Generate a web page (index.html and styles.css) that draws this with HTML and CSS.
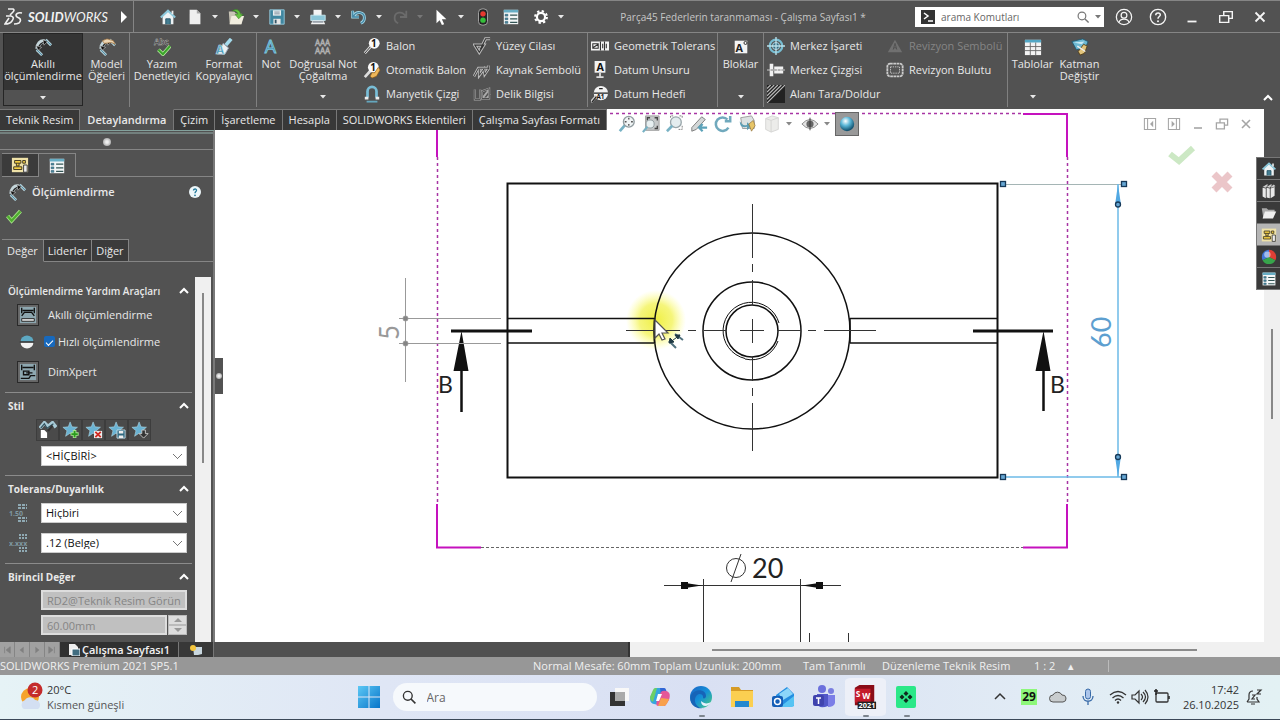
FILE: index.html
```html
<!DOCTYPE html>
<html lang="tr">
<head>
<meta charset="utf-8">
<meta name="viewport" content="width=device-width, initial-scale=1">
<title>Parça45 Federlerin taranmaması - Çalışma Sayfası1</title>
<link rel="stylesheet" href="styles.css">
</head>
<body>
<svg class="sprite" aria-hidden="true">
  <defs>
    <radialGradient id="ball" cx=".4" cy=".3" r=".7"><stop offset="0" stop-color="#fff"/><stop offset=".45" stop-color="#5db8d8"/><stop offset="1" stop-color="#0b4a68"/></radialGradient>
    <linearGradient id="edge" x1="0" y1="0" x2="1" y2="1"><stop offset="0" stop-color="#1b62c4"/><stop offset=".5" stop-color="#1490d8"/><stop offset="1" stop-color="#4fd07a"/></linearGradient>
    <linearGradient id="win" x1="0" y1="0" x2="1" y2="1"><stop offset="0" stop-color="#5cc8f5"/><stop offset="1" stop-color="#0874c9"/></linearGradient>
  </defs>
  <symbol id="caret" viewBox="0 0 8 8"><path d="M1 2h6L4 5.500z" fill="currentColor"/></symbol>
  <symbol id="up" viewBox="0 0 12 12"><path d="M2 8l4-4 4 4" fill="none" stroke="currentColor" stroke-width="2"/></symbol>
  <symbol id="home" viewBox="0 0 20 20"><path d="M4 9v9h12V9l-6-5z" fill="#eef3f4"/><path d="M2 10.500L10 3l8 7.500" fill="none" stroke="#8cc9dc" stroke-width="2.200"/><path d="M7.500 18v-6h5v6" fill="#447d91" stroke="#225064"/><path d="M14 3h2v4h-2z" fill="#eee"/></symbol>
  <symbol id="page" viewBox="0 0 20 20"><path d="M4 2h8l4 4v12H4z" fill="#efefef"/><path d="M12 2v4h4z" fill="#a7a7a7"/></symbol>
  <symbol id="open" viewBox="0 0 20 20"><path d="M2 4h6l2 2h6v12H3z" fill="#c8c4b6"/><path d="M5 9h14l-3 9H3z" fill="#f1eddf"/><path d="M6 3c5-3 9 0 9 4h3l-5 5-4-5h3c0-2-2-4-6-4z" fill="#65c442" stroke="#2c7a1b" stroke-width=".6"/></symbol>
  <symbol id="save" viewBox="0 0 20 20"><path d="M2 2h16v16H2z" fill="#3f86a0" stroke="#96cbdc"/><path d="M5.500 2.500h9v6h-9z" fill="#e8eef0"/><path d="M6 12h8v6H6z" fill="#e5e5e5"/><path d="M7.500 13h2v4h-2z" fill="#356"/><path d="M7 4.500h6M7 6.500h6" stroke="#789"/></symbol>
  <symbol id="print" viewBox="0 0 20 20"><path d="M5 2h9v7H5z" fill="#f4f4f4"/><path d="M2 8h16v6H2z" fill="#8cc6d8" stroke="#c5e5ee"/><path d="M4 14h12l2 4H2z" fill="#f3f3f3"/><path d="M4 15.500h12" stroke="#456"/></symbol>
  <symbol id="undo" viewBox="0 0 20 20"><path d="M3 3v7h7M4 9c3-6 12-5 12 2 0 3-2 5-4 6" fill="none" stroke="#a1d7e8" stroke-width="3.200"/><path d="M3 3v7h7M4 9c3-6 12-5 12 2 0 3-2 5-4 6" fill="none" stroke="#4386a4" stroke-width="1.400"/></symbol>
  <symbol id="redo" viewBox="0 0 20 20"><path d="M17 3v7h-7M16 9C13 3 4 4 4 11c0 3 2 5 4 6" fill="none" stroke="#6b6b6b" stroke-width="2"/></symbol>
  <symbol id="arrow" viewBox="0 0 20 20"><path d="M5 2v15l3.500-3.500L11 19l2.500-1-2.500-5.500h5z" fill="#fff"/></symbol>
  <symbol id="traffic" viewBox="0 0 20 20"><rect x="5" y="1" width="10" height="18" rx="4" fill="#242424" stroke="#aaa"/><circle cx="10" cy="6.500" r="3" fill="#e6392f"/><circle cx="10" cy="13.500" r="3" fill="#35be3b"/></symbol>
  <symbol id="form" viewBox="0 0 20 20"><path d="M2 2h16v16H2z" fill="#f3f6f7"/><path d="M2 2h16v3H2z" fill="#68aec5"/><path d="M3.500 7h3v2h-3zM3.500 11h3v2h-3zM3.500 15h3v2h-3z" fill="#4a8ba3" stroke="#28566a" stroke-width=".6"/><path d="M9 8h8M9 12h8M9 16h8" stroke="#355" stroke-width="1.300"/></symbol>
  <symbol id="gear" viewBox="0 0 20 20"><circle cx="10" cy="10" r="4.500" fill="none" stroke="#fff" stroke-width="2.400"/><circle cx="10" cy="10" r="6.500" fill="none" stroke="#fff" stroke-width="2.400" stroke-dasharray="2.550 2.550"/></symbol>
  <symbol id="dim" viewBox="0 0 20 20"><path d="M3 13l6 6M13 2l6 6" stroke="#c9e4ec" stroke-width="3"/><path d="M3 13l6 6M13 2l6 6" stroke="#568ca0" stroke-width="1.300"/><path d="M4 12c0-5 3-9 8-8" fill="none" stroke="#c4d5da" stroke-width="5"/><path d="M5 11c1-4 3-6 7-6.500" fill="none" stroke="#202020" stroke-width="1.500"/><path d="M2.500 8.500l2 5 4-3zM10 2l5 2-4 4z" fill="#111" stroke="#ccc" stroke-width=".6"/></symbol>
  <symbol id="model" viewBox="0 0 20 20"><use href="#dim"/><path d="M5 3l5-2 7 2 2 4-4-2-8 1z" fill="#ecd5b4" stroke="#a6743c" stroke-width=".8"/></symbol>
  <symbol id="magnet" viewBox="0 0 20 20"><path d="M5 14V7a5 5 0 0 1 10 0v7" fill="none" stroke="#79bed7" stroke-width="3"/><path d="M2 13h4v3H2zM14 13h4v3h-4z" fill="#eee"/><path d="M4 18.500h12" stroke="#64a6bd" stroke-width="2"/></symbol>
  <symbol id="surface" viewBox="0 0 20 20"><path d="M2 9h10L7 17zM8 14l6-12h5" fill="none" stroke="#bbb" stroke-width="3.400"/><path d="M2 9h10L7 17zM8 14l6-12h5" fill="none" stroke="#333" stroke-width="1.200"/></symbol>
  <symbol id="weld" viewBox="0 0 20 20"><path d="M1 17l5-9h12M7 9v7l5-7 1 6 4-6V5" fill="none" stroke="#bbb" stroke-width="3"/><path d="M1 17l5-9h12M7 9v7l5-7 1 6 4-6V5" fill="none" stroke="#333"/></symbol>
  <symbol id="hole" viewBox="0 0 20 20"><path d="M2 5v11h6V5M10 15V7l8-3v11zM11 14l7-9M15 15l4-5" fill="none" stroke="#aaa" stroke-width="2.200"/><path d="M2 5v11h6V5M10 15V7l8-3v11z" fill="none" stroke="#444"/></symbol>
  <symbol id="gtol" viewBox="0 0 20 20"><path d="M0 5h20v10H0z" fill="#f3f3f3"/><path d="M2 7.500h6v5H2zM2 12l6-4M10.500 5v10M15 5v10M13 7.500v5M17 7.500v5" fill="none" stroke="#333" stroke-width="1.200"/></symbol>
  <symbol id="center" viewBox="0 0 20 20"><circle cx="10" cy="10" r="7" fill="none" stroke="#78bdd2" stroke-width="2.500"/><circle cx="10" cy="10" r="4" fill="#356a80" stroke="#bce2ed"/><path d="M10 0v20M0 10h20" stroke="#b8dfe9" stroke-width="1.500"/></symbol>
  <symbol id="line" viewBox="0 0 20 20"><path d="M3 3h4v14H3zM8 6h10v8H8z" fill="#f1f1f1"/><path d="M0 10h20" stroke="#d9d9d9"/><path d="M4 10h14" stroke="#777" stroke-dasharray="3 1"/></symbol>
  <symbol id="hatch" viewBox="0 0 20 20"><path d="M0 0h20v20H0z" fill="#222"/><path d="M0 4l4-4M0 8l8-8M0 12L12 0M0 16L16 0M0 20L20 0" stroke="#bbb" stroke-width="1.300"/></symbol>
  <symbol id="revision" viewBox="0 0 20 20"><path d="M10 3l8 14H2z" fill="#707070"/><path d="M8 14l2-7 2 7M9 12h2" stroke="#4e4e4e" fill="none"/></symbol>
  <symbol id="cloudrev" viewBox="0 0 20 20"><rect x="1.500" y="3" width="17" height="14" rx="3" fill="#555" stroke="#ccc" stroke-width="2" stroke-dasharray="3 .6"/><rect x="5" y="6.500" width="10" height="7" fill="none" stroke="#ccc" stroke-dasharray="1.500 1"/></symbol>
  <symbol id="table" viewBox="0 0 20 20"><path d="M1 2h18v17H1z" fill="#f3f3f3"/><path d="M1 2h18v3H1z" fill="#53a7c5"/><path d="M1 9.500h18M1 14h18M7 5v14M13 5v14" stroke="#666"/></symbol>
  <symbol id="layer" viewBox="0 0 20 20"><path d="M1 4l12-3 6 3-3 7-10 2z" fill="#6db9d2" stroke="#235a70"/><path d="M3 5l12-1-3 3z" fill="#c8eaf4"/><path d="M8 15l6-8 4 2-3 8-5 2z" fill="#e1c47b" stroke="#554019"/><path d="M7 9l9 6" stroke="#eee" stroke-width="1.500"/></symbol>
  <symbol id="help" viewBox="0 0 20 20"><circle cx="10" cy="10" r="8.500" fill="none" stroke="currentColor" stroke-width="1.500"/><path d="M7.500 8c0-3.500 5.500-3.300 5 0-.3 1.500-2.500 1.600-2.500 4" fill="none" stroke="currentColor" stroke-width="1.700"/><circle cx="10" cy="14.800" r="1.100" fill="currentColor"/></symbol>
  <symbol id="user" viewBox="0 0 20 20"><circle cx="10" cy="10" r="8.500" fill="none" stroke="currentColor" stroke-width="1.400"/><circle cx="10" cy="8" r="3.200" fill="none" stroke="currentColor" stroke-width="1.400"/><path d="M4.500 16c1-5 10-5 11 0" fill="none" stroke="currentColor" stroke-width="1.400"/></symbol>
  <symbol id="min" viewBox="0 0 20 20"><path d="M5 15h10" stroke="currentColor" stroke-width="2"/></symbol>
  <symbol id="restore" viewBox="0 0 20 20"><path d="M7.500 8V4H17v7.500h-4M3 8.500h10V16H3z" fill="none" stroke="currentColor" stroke-width="1.600"/></symbol>
  <symbol id="close" viewBox="0 0 20 20"><path d="M5 5l10 10M15 5L5 15" stroke="currentColor" stroke-width="2"/></symbol>
  <symbol id="mag" viewBox="0 0 20 20"><circle cx="8.500" cy="8.500" r="5.500" fill="none" stroke="currentColor" stroke-width="1.700"/><path d="M12.500 12.500L18 18" stroke="currentColor" stroke-width="2"/></symbol>
  <symbol id="sheet" viewBox="0 0 20 20"><path d="M1 2h18v16H1z" fill="#efe2a8"/><path d="M4 5h7v3H4zM13 5h3v3h-3zM6 8v3h3V8M3 15h9v-3H3z" fill="#f3cf45" stroke="#38311e"/><path d="M14 10h4v8h-4z" fill="#eee" stroke="#333"/></symbol>
  <symbol id="check" viewBox="0 0 20 20"><path d="M2 10l5 6L18 4" fill="none" stroke="#a9e38c" stroke-width="5"/><path d="M2 10l5 6L18 4" fill="none" stroke="#4fae2e" stroke-width="3"/></symbol>
  <symbol id="smart" viewBox="0 0 20 20"><path d="M1 1h18v18H1z" fill="#8da7b0"/><path d="M3 2v6M17 2v6M4 5h12M3 11l3-4h8l3 4" fill="none" stroke="#111" stroke-width="1.500"/><path d="M3 14h14v3H3z" fill="#ddd" stroke="#222"/></symbol>
  <symbol id="dimx" viewBox="0 0 20 20"><path d="M1 1h18v18H1z" fill="#8da7b0"/><path d="M3 2v6M17 2v6M4 5h12M2 17h9l2-3h5M5 9h6v4H5zM8 11h7" fill="none" stroke="#111" stroke-width="1.500"/></symbol>
  <symbol id="half" viewBox="0 0 20 20"><path d="M2 9a8 7 0 0 1 16 0z" fill="#5da8c2"/><path d="M2 11a8 7 0 0 0 16 0z" fill="#f2f2f2"/><path d="M1 10h18" stroke="#222"/></symbol>
  <symbol id="defstyle" viewBox="0 0 20 20"><path d="M1 8l5-6 4 4 5-4 4 5" fill="none" stroke="#a8cad6" stroke-width="4"/><path d="M2 8l4-5 3 5 7-5" fill="none" stroke="#30505c" stroke-width="1.300"/><path d="M10 11l5-6" stroke="#333" stroke-width="2.500"/><path d="M2 10h4l3 3v6H2z" fill="#fff"/></symbol>
  <symbol id="star" viewBox="0 0 20 20"><path d="M9 1l2.200 5.500 6 .4-4.600 3.800L14 17l-5-3.500L4 17l1.500-6.300L1 7l6-.5z" fill="#6ab3d3" stroke="#b3d9e7" stroke-width=".6"/></symbol>
  <symbol id="addstar" viewBox="0 0 20 20"><use href="#star"/><path d="M14 10v9M9.500 14.500h9" stroke="#a6e38f" stroke-width="4"/><path d="M14 11v7M10.500 14.500h7" stroke="#2b9b1e" stroke-width="2"/></symbol>
  <symbol id="delstar" viewBox="0 0 20 20"><use href="#star"/><path d="M10 11h9v8h-9z" fill="#eee"/><path d="M11.500 12l6 6M17.500 12l-6 6" stroke="#d12a22" stroke-width="2"/></symbol>
  <symbol id="savestar" viewBox="0 0 20 20"><use href="#star"/><path d="M10 10h9v9h-9z" fill="#2f6980" stroke="#c4dde6"/><path d="M12 11h5v3h-5zM12 16h5v3h-5z" fill="#eee"/></symbol>
  <symbol id="loadstar" viewBox="0 0 20 20"><use href="#star"/><path d="M12 10h4v4h3l-5 5-5-5h3z" fill="#333" stroke="#ccc"/></symbol>
  <symbol id="books" viewBox="0 0 20 20"><path d="M2 6l4 1v12l-4-2zM7 6l4 1v12l-4-1zM12 7l5-2v11l-5 3z" fill="#e8e8e8"/><path d="M2 5l5-3h2L6 6zM7 5l5-3h2l-3 4zM12 5l4-3 2 2-5 2z" fill="#ccc"/></symbol>
  <symbol id="folder" viewBox="0 0 20 20"><path d="M1 4h6l2 2h8v4L3 17z" fill="#aaa"/><path d="M5 8h14l-4 9H2z" fill="#efefef"/></symbol>
  <symbol id="wheel" viewBox="0 0 20 20"><path d="M10 10V1a9 9 0 0 0-8 13z" fill="#4276d8"/><path d="M10 10V1a9 9 0 0 1 8 13z" fill="#df3f35"/><path d="M10 10l8 4a9 9 0 0 1-16 0z" fill="#37a54b"/><circle cx="8" cy="7" r="4" fill="#fff" opacity=".5"/></symbol>
  <symbol id="zoomfit" viewBox="0 0 20 20"><path d="M2 18l6-7" stroke="#76b1c4" stroke-width="3"/><circle cx="12" cy="7.500" r="6" fill="#f0f4f5" stroke="#929da1" stroke-width="1.500"/><path d="M12 3v2M12 10v2M7.500 7.500h2M14.500 7.500h2" stroke="#555" stroke-width="1.500"/></symbol>
  <symbol id="zoomarea" viewBox="0 0 20 20"><path d="M4 1h15v16H4z" fill="#c6c9ca" stroke="#999"/><path d="M6 6V3h3M14 3h3v3M17 12v3h-3" fill="none" stroke="#444" stroke-width="1.500"/><circle cx="9" cy="10" r="4.500" fill="#e7eff1" stroke="#8c999d"/><path d="M1 19l5-6" stroke="#79b2c4" stroke-width="2.500"/></symbol>
  <symbol id="zoomprev" viewBox="0 0 20 20"><path d="M8 1H5v3M15 1h3v3M18 12v4h-4" fill="none" stroke="#777" stroke-dasharray="2 1"/><circle cx="11" cy="8" r="6" fill="#e4edef" stroke="#9aa7ab" stroke-width="1.500"/><path d="M1 18l6-6" stroke="#79b2c4" stroke-width="3"/></symbol>
  <symbol id="pencil" viewBox="0 0 20 20"><path d="M2 14L13 2l4 3L7 16l-5 2z" fill="#d3d7d7" stroke="#777"/><path d="M19 14h-7M14 10l-4 4 4 4" fill="none" stroke="#5ca2b9" stroke-width="2.500"/></symbol>
  <symbol id="rotate" viewBox="0 0 20 20"><path d="M16 14a7.500 7.500 0 1 1-1-9M18 1v6h-6" fill="none" stroke="#70a9bd" stroke-width="2.800"/></symbol>
  <symbol id="section" viewBox="0 0 20 20"><path d="M3 3l12-2 3 5v9H5z" fill="#dce2e2" stroke="#999"/><path d="M2 7c0 7 4 7 8 6v4l5-5-5-4v3c-4 1-5 0-8-4z" fill="#5e9eb4"/><path d="M12 10l5-4 2 6-4 6z" fill="#e7c568" stroke="#886831" stroke-width=".7"/></symbol>
  <symbol id="cube" viewBox="0 0 20 20"><path d="M3 4l7-3 7 2v13l-8 3-6-3z" fill="#ececea" stroke="#d4d4d2"/><path d="M3 4l6 2v13M9 6l8-3" fill="none" stroke="#d4d4d2"/></symbol>
  <symbol id="eye" viewBox="0 0 20 20"><path d="M1 10q9-10 18 0-9 10-18 0z" fill="#e3e3e3" stroke="#888"/><circle cx="10" cy="10" r="4" fill="#666"/><path d="M10 3v14" stroke="#333"/></symbol>
  <symbol id="sphere" viewBox="0 0 20 20"><circle cx="10" cy="10" r="8" fill="url(#ball)"/></symbol>
  <symbol id="prevpane" viewBox="0 0 20 20"><path d="M3 3h14v14H3zM7 3v14" fill="none" stroke="currentColor" stroke-width="1.300"/><path d="M14 6v8l-4-4z" fill="currentColor"/></symbol>
  <symbol id="nextpane" viewBox="0 0 20 20"><path d="M3 3h14v14H3zM13 3v14" fill="none" stroke="currentColor" stroke-width="1.300"/><path d="M7 6v8l4-4z" fill="currentColor"/></symbol>
</svg>

<header class="titlebar">
  <div class="brand">
    <svg class="ds" viewBox="0 0 20 18" aria-hidden="true"><path d="M4 1h5q2 1 0 3L6 7M2 8h5q4 1 1 5-2 3-7 3l4-6M18 5q-5-1-6 2 0 2 3 3 3 2 0 5-2 1-5 1" fill="none" stroke="#f0f0f0" stroke-width="1.600"/></svg>
    <span class="wordmark"><b>SOLID</b>WORKS</span>
    <svg class="play" viewBox="0 0 8 12" aria-hidden="true"><path d="M1 0v12l6-6z" fill="#fff"/></svg>
  </div>
  <nav class="quick" aria-label="Hızlı erişim">
    <button class="q" aria-label="Giriş"><svg class="ic"><use href="#home"/></svg></button>
    <button class="q split" aria-label="Yeni"><svg class="ic"><use href="#page"/></svg><svg class="car"><use href="#caret"/></svg></button>
    <button class="q split" aria-label="Aç"><svg class="ic"><use href="#open"/></svg><svg class="car"><use href="#caret"/></svg></button>
    <button class="q split" aria-label="Kaydet"><svg class="ic"><use href="#save"/></svg><svg class="car"><use href="#caret"/></svg></button>
    <button class="q split" aria-label="Yazdır"><svg class="ic"><use href="#print"/></svg><svg class="car"><use href="#caret"/></svg></button>
    <button class="q split" aria-label="Geri al"><svg class="ic"><use href="#undo"/></svg><svg class="car"><use href="#caret"/></svg></button>
    <button class="q split dim" aria-label="Yinele"><svg class="ic"><use href="#redo"/></svg><svg class="car"><use href="#caret"/></svg></button>
    <button class="q split" aria-label="Seç"><svg class="ic"><use href="#arrow"/></svg><svg class="car"><use href="#caret"/></svg></button>
    <button class="q" aria-label="Yeniden oluştur"><svg class="ic"><use href="#traffic"/></svg></button>
    <button class="q" aria-label="Dosya özellikleri"><svg class="ic"><use href="#form"/></svg></button>
    <button class="q split" aria-label="Seçenekler"><svg class="ic"><use href="#gear"/></svg><svg class="car"><use href="#caret"/></svg></button>
  </nav>
  <h1 class="doc">Parça45 Federlerin taranmaması - Çalışma Sayfası1 *</h1>
  <label class="search">
    <svg viewBox="0 0 14 14" class="term" aria-hidden="true"><path d="M0 0h14v14H0z" fill="#333"/><path d="M3 3l4 3-4 3M7 11h5" fill="none" stroke="#fff" stroke-width="1.500"/></svg>
    <input type="text" placeholder="arama Komutları" aria-label="arama Komutları">
    <svg class="mag"><use href="#mag"/></svg><svg class="car"><use href="#caret"/></svg>
  </label>
  <div class="winbtns">
    <button aria-label="Hesap"><svg class="ic"><use href="#user"/></svg></button>
    <button aria-label="Yardım"><svg class="ic"><use href="#help"/></svg></button>
    <button aria-label="Simge durumuna küçült"><svg class="ic"><use href="#min"/></svg></button>
    <button aria-label="Geri yükle"><svg class="ic"><use href="#restore"/></svg></button>
    <button aria-label="Kapat"><svg class="ic"><use href="#close"/></svg></button>
  </div>
</header>

<section class="ribbon" aria-label="Detaylandırma komutları">
  <div class="group g1">
    <button class="big active"><span class="face"><svg class="ic"><use href="#dim"/></svg>Akıllı<br>ölçümlendirme</span><svg class="car"><use href="#caret"/></svg></button>
    <button class="big w45"><span class="face"><svg class="ic"><use href="#model"/></svg>Model<br>Öğeleri</span></button>
  </div>
  <div class="group g2">
    <button class="big w64"><span class="face"><svg class="ic" viewBox="0 0 20 20"><text x="1" y="8" font-size="9" font-weight="700" fill="#333" stroke="#ccc" stroke-width=".4">Abc</text><path d="M6 13l5 5 8-9" fill="none" stroke="#c4efad" stroke-width="4"/><path d="M6 13l5 5 8-9" fill="none" stroke="#3ba52b" stroke-width="2.500"/></svg>Yazım<br>Denetleyici</span></button>
    <button class="big w60"><span class="face"><svg class="ic" viewBox="0 0 20 20"><path d="M18 1l-6 7" stroke="#a5dbec" stroke-width="4"/><path d="M9 6l6 5-4 7H3z" fill="#edf0f0" stroke="#9ab"/><text x="1" y="18" font-size="13" font-weight="700" fill="#3a8daf" stroke="#d3edf5" stroke-width=".6">A</text></svg>Format<br>Kopyalayıcı</span></button>
  </div>
  <div class="group g3">
    <button class="big w28"><span class="face"><svg class="ic" viewBox="0 0 20 20"><text x="3" y="17" font-size="20" fill="#347b9a" stroke="#7cc6df">A</text></svg>Not</span></button>
    <button class="big w76"><span class="face"><svg class="ic" viewBox="0 0 20 20"><g font-size="9" fill="#474747" stroke="#b0b0b0" stroke-width=".7"><text x="1" y="9">AAA</text><text x="1" y="18">AAA</text></g></svg>Doğrusal Not<br>Çoğaltma</span><svg class="car"><use href="#caret"/></svg></button>
    <div class="list w110">
      <button><svg class="ic" viewBox="0 0 20 20"><path d="M2 18l7-8" stroke="#ddd" stroke-width="3"/><path d="M2 18l7-8" stroke="#222"/><circle cx="12.500" cy="7" r="6" fill="#fafafa"/><text x="9" y="11" font-size="11" font-weight="700" fill="#111">1</text></svg>Balon</button>
      <button><svg class="ic" viewBox="0 0 20 20"><path d="M2 18l7-8" stroke="#ddd" stroke-width="3"/><circle cx="11.500" cy="7" r="6" fill="#fafafa"/><text x="8" y="11" font-size="11" font-weight="700" fill="#111">1</text><path d="M8 17l2-4 3 0 4-6 2 3-4 7-5 2z" fill="#edb75b" stroke="#91590d" stroke-width=".7"/></svg>Otomatik Balon</button>
      <button><svg class="ic"><use href="#magnet"/></svg>Manyetik Çizgi</button>
    </div>
    <div class="list">
      <button><svg class="ic"><use href="#surface"/></svg>Yüzey Cilası</button>
      <button><svg class="ic"><use href="#weld"/></svg>Kaynak Sembolü</button>
      <button><svg class="ic"><use href="#hole"/></svg>Delik Bilgisi</button>
    </div>
  </div>
  <div class="group g4">
    <div class="list">
      <button><svg class="ic"><use href="#gtol"/></svg>Geometrik Tolerans</button>
      <button><svg class="ic" viewBox="0 0 20 20"><path d="M4 0h12v13H4z" fill="#f3f3f3"/><text x="6" y="11" font-size="12" font-weight="700" fill="#111">A</text><path d="M10 13v4M6 18h8" stroke="#ddd" stroke-width="2"/></svg>Datum Unsuru</button>
      <button><svg class="ic" viewBox="0 0 20 20"><circle cx="11" cy="9" r="8" fill="#f2f2f2"/><path d="M0 19l6-7" stroke="#ccc" stroke-width="3"/><path d="M3 9h16M1 19l5-6M9 4h4" stroke="#222" stroke-width="1.300"/><text x="6" y="16" font-size="7" font-weight="700" fill="#111">A1</text></svg>Datum Hedefi</button>
    </div>
  </div>
  <div class="group g5">
    <button class="big w45"><span class="face"><svg class="ic" viewBox="0 0 20 20"><path d="M3 3h14v14H3z" fill="#f4f4f4"/><text x="4" y="15" font-size="12" font-weight="700" fill="#222">A</text><circle cx="15" cy="5.500" r="1.700" fill="none" stroke="#222"/></svg>Bloklar</span><svg class="car"><use href="#caret"/></svg></button>
  </div>
  <div class="group g6">
    <div class="list w120">
      <button><svg class="ic"><use href="#center"/></svg>Merkez İşareti</button>
      <button><svg class="ic"><use href="#line"/></svg>Merkez Çizgisi</button>
      <button><svg class="ic"><use href="#hatch"/></svg>Alanı Tara/Doldur</button>
    </div>
    <div class="list">
      <button disabled><svg class="ic"><use href="#revision"/></svg>Revizyon Sembolü</button>
      <button><svg class="ic"><use href="#cloudrev"/></svg>Revizyon Bulutu</button>
    </div>
  </div>
  <div class="group g7">
    <button class="big w45"><span class="face"><svg class="ic"><use href="#table"/></svg>Tablolar</span><svg class="car"><use href="#caret"/></svg></button>
    <button class="big w45"><span class="face"><svg class="ic"><use href="#layer"/></svg>Katman<br>Değiştir</span></button>
  </div>
  <button class="collapse" aria-label="Şeridi daralt"><svg class="chev"><use href="#up"/></svg></button>
</section>

<main class="work">
  <nav class="tabs">
    <button>Teknik Resim</button><button class="on">Detaylandırma</button><button>Çizim</button><button>İşaretleme</button><button>Hesapla</button><button>SOLIDWORKS Eklentileri</button><button>Çalışma Sayfası Formatı</button>
  </nav>

  <aside class="panel">
    <div class="grip"><i class="dot"></i></div>
    <div class="ptabs">
      <button class="off" aria-label="Tasarım ağacı"><svg class="ic"><use href="#sheet"/></svg></button>
      <button aria-label="Özellikler"><svg class="ic"><use href="#form"/></svg></button>
    </div>
    <div class="ptitle"><svg class="ic"><use href="#dim"/></svg><h2>Ölçümlendirme</h2>
      <button aria-label="Yardım"><svg viewBox="0 0 12 12"><circle cx="6" cy="6" r="6" fill="#eef7fa"/><path d="M4.500 4.500c0-2 3.300-2 3 0C7.300 5.600 6 5.500 6 7.300" fill="none" stroke="#23799b" stroke-width="1.300"/><circle cx="6" cy="9.300" r=".9" fill="#23799b"/></svg></button></div>
    <button class="ok" aria-label="Tamam"><svg class="ic"><use href="#check"/></svg></button>
    <div class="subtabs"><button class="on">Değer</button><button>Liderler</button><button>Diğer</button><i></i></div>
    <div class="scroller">
      <div class="props">
        <section class="first">
          <h3>Ölçümlendirme Yardım Araçları<svg class="chev"><use href="#up"/></svg></h3>
          <div class="aids">
            <button class="aid"><svg class="ic framed"><use href="#smart"/></svg>Akıllı ölçümlendirme</button>
            <label class="aid quickdim"><svg class="ic"><use href="#half"/></svg><input type="checkbox" checked>Hızlı ölçümlendirme</label>
            <button class="aid"><svg class="ic framed"><use href="#dimx"/></svg>DimXpert</button>
          </div>
        </section>
        <section>
          <h3>Stil<svg class="chev"><use href="#up"/></svg></h3>
          <div class="styles">
            <button aria-label="Varsayılan"><svg class="ic"><use href="#defstyle"/></svg></button><button aria-label="Ekle"><svg class="ic"><use href="#addstar"/></svg></button><button aria-label="Sil"><svg class="ic"><use href="#delstar"/></svg></button><button aria-label="Kaydet"><svg class="ic"><use href="#savestar"/></svg></button><button aria-label="Yükle"><svg class="ic"><use href="#loadstar"/></svg></button>
          </div>
          <div class="field"><select aria-label="Stil"><option>&lt;HİÇBİRİ&gt;</option></select></div>
        </section>
        <section class="tight">
          <h3>Tolerans/Duyarlılık<svg class="chev"><use href="#up"/></svg></h3>
          <div class="field tall"><svg class="ic" viewBox="0 0 20 20"><g fill="#7f98a1" font-size="7" font-weight="700"><path d="M9 2h9M9 5h9M9 15h9M9 18h9" stroke="#8fa9b3" stroke-width="2" stroke-dasharray="3 1"/><text x="0" y="13">1.50</text></g></svg><select aria-label="Tolerans tipi"><option>Hiçbiri</option></select></div>
          <div class="field tall"><svg class="ic" viewBox="0 0 20 20"><g fill="#7f98a1" font-size="7" font-weight="700"><path d="M10 2h8M10 5h8M10 15h8M10 18h8" stroke="#8fa9b3" stroke-width="2" stroke-dasharray="2 1"/><text x="0" y="13">x.xxx</text></g></svg><select aria-label="Birim duyarlılığı"><option>.12 (Belge)</option></select></div>
        </section>
        <section>
          <h3>Birincil Değer<svg class="chev"><use href="#up"/></svg></h3>
          <div class="field"><input type="text" disabled value="RD2@Teknik Resim Görünümü" aria-label="Ölçü adı"></div>
          <div class="field value"><input type="text" disabled value="60.00mm" aria-label="Ölçü değeri"><span class="spin"><button disabled aria-label="Artır"><svg viewBox="0 0 8 6"><path d="M0 5h8L4 1z" fill="#999"/></svg></button><button disabled aria-label="Azalt"><svg viewBox="0 0 8 6"><path d="M0 1h8L4 5z" fill="#999"/></svg></button></span></div>
        </section>
      </div>
      <div class="pscroll"><i></i></div>
    </div>
  </aside>

  <div class="canvas">
    <svg class="drawing" viewBox="215 109 1049 533" preserveAspectRatio="xMidYMid slice" role="img" aria-label="Teknik resim">
      <defs><radialGradient id="glow"><stop offset="0" stop-color="#eeee2e" stop-opacity=".9"/><stop offset=".55" stop-color="#f2f250" stop-opacity=".75"/><stop offset="1" stop-color="#ffff80" stop-opacity="0"/></radialGradient></defs>
      <g fill="none" stroke="#a834a4" stroke-width="1.500" stroke-dasharray="3 3"><path d="M610 113.500h413M437.500 157v347M1067.500 157v347"/></g>
      <path d="M481 547.500h542" stroke="#666" stroke-dasharray="3 2"/>
      <path d="M437 130v27M1023 114h44v43M437 504v43.500h44M1023 547.500h44V504" fill="none" stroke="#c512be" stroke-width="2"/>
      <circle cx="656" cy="320" r="30" fill="url(#glow)"/>
      <g fill="none" stroke="#111" stroke-width="1.500">
        <rect x="507.500" y="183.500" width="490" height="294" stroke-width="2"/>
        <path d="M507 318.500h147M507 343h147M654.500 318v25M850 318.500h147M850 343h147M850 318v25"/>
        <circle cx="752" cy="331" r="98"/><circle cx="752" cy="331" r="49"/><circle cx="752" cy="331" r="26"/>
        <path d="M779 323a28.500 28.500 0 1 0-34 35.500" stroke-width="1"/><path d="M745 359a28 28 0 0 0 33-18" stroke-width="1"/>
      </g>
      <path d="M626 330.500h54M688 330.500h8M704 330.500h22M740 330.500h24M777 330.500h24M808 330.500h8M824 330.500h52M752.500 204v54M752.500 264v8M752.500 280v25M752.500 319v24M752.500 357v24M752.500 388v8M752.500 403v48" stroke="#333"/>
      <path d="M451 331h81M973 331h80" stroke="#111" stroke-width="3"/>
      <path d="M461.500 366v46M1043.500 366v45" stroke="#111" stroke-width="2.500"/>
      <path d="M461.500 331l7 40h-15zM1043.500 331l7 40h-15z" fill="#111"/>
      <g class="cad" fill="#222"><text x="438" y="393" font-size="23">B</text><text x="1050" y="393" font-size="23">B</text><text x="752" y="578" font-size="27">20</text></g>
      <g stroke="#999" fill="#858585"><path d="M405.500 278v104M399 318.500h102M399 343.500h102" fill="none"/><circle cx="405.500" cy="318.500" r="2.500"/><circle cx="405.500" cy="343.500" r="2.500"/></g>
      <text class="cad" transform="translate(399 340) rotate(-90)" font-size="26" fill="#999">5</text>
      <path d="M1003 184.500h121" stroke="#a5b5b5"/><path d="M1003 477h121M1118 184v293" stroke="#6dbbe8" stroke-width="1.500"/>
      <path d="M1118 184l3 21h-6zM1118 477l3-21h-6z" fill="#52a9e3"/>
      <g fill="#67a7d4" stroke="#173958" stroke-width="1.300"><rect x="1000.500" y="181.500" width="5" height="5"/><rect x="1121.500" y="181.500" width="5" height="5"/><rect x="1000.500" y="474.500" width="5" height="5"/><rect x="1121.500" y="474.500" width="5" height="5"/><circle cx="1118" cy="204.500" r="2.500"/><circle cx="1118" cy="457" r="2.500"/></g>
      <text class="cad" transform="translate(1111 348) rotate(-90)" font-size="27" fill="#5d9fd0">60</text>
      <g fill="none" stroke="#333"><circle cx="736" cy="568" r="9.500"/><path d="M731 582l10-28M703.500 579v63M800.500 579v63M664 585.500h177M809.500 633v9M848.500 633v9"/></g>
      <g fill="#111"><path d="M702 585.500l-20-3v6z"/><path d="M681 582h7v7h-7z"/><path d="M802 585.500l20-3v6z"/><path d="M816 582h7v7h-7z"/></g>
      <path d="M655 320v18l4-4 3 6 3-1-3-6h6z" fill="#fff" stroke="#555" stroke-width="1.200"/>
      <path d="M669 341l7 7M675 334l8 6" stroke="#51717d" stroke-width="2"/><path d="M669 343l11-8M669 343l1-5 4 4zM680 335l-5 0 3 4z" stroke="#203944" fill="#203944"/>
      <path d="M1170 154l9 7 14-13" fill="none" stroke="#cce8c4" stroke-width="6"/><path d="M1214 174l16 16M1230 174l-16 16" stroke="#ebc6c9" stroke-width="7"/>
    </svg>
    <div class="hud">
      <button aria-label="Ekrana sığdır"><svg class="ic"><use href="#zoomfit"/></svg></button><button aria-label="Alana yakınlaştır"><svg class="ic"><use href="#zoomarea"/></svg></button><button aria-label="Yakınlaştır"><svg class="ic"><use href="#zoomprev"/></svg></button><button aria-label="Önceki görünüm"><svg class="ic"><use href="#pencil"/></svg></button><button aria-label="Döndür"><svg class="ic"><use href="#rotate"/></svg></button><button aria-label="Kesit görünümü"><svg class="ic"><use href="#section"/></svg></button><button class="wide" aria-label="Görüntü stili"><svg class="ic"><use href="#cube"/></svg><svg class="car"><use href="#caret"/></svg></button><button class="wide" aria-label="Gizle/Göster"><svg class="ic"><use href="#eye"/></svg><svg class="car"><use href="#caret"/></svg></button><button class="pressed" aria-label="Görünüm"><svg class="ic"><use href="#sphere"/></svg></button>
    </div>
    <div class="childwin">
      <button aria-label="Önceki bölme"><svg class="ic"><use href="#prevpane"/></svg></button><button aria-label="Sonraki bölme"><svg class="ic"><use href="#nextpane"/></svg></button><button aria-label="Küçült"><svg class="ic"><use href="#min"/></svg></button><button aria-label="Geri yükle"><svg class="ic"><use href="#restore"/></svg></button><button aria-label="Kapat"><svg class="ic"><use href="#close"/></svg></button>
    </div>
    <button class="handle" aria-label="Paneli daralt"><i class="dot"></i></button>
  </div>

  <aside class="rail"><div class="cap"></div><div class="vscroll"><i></i></div>
    <div class="taskpane">
      <button aria-label="Kaynaklar"><svg class="ic"><use href="#home"/></svg></button><button aria-label="Tasarım kitaplığı"><svg class="ic"><use href="#books"/></svg></button><button aria-label="Dosya gezgini"><svg class="ic"><use href="#folder"/></svg></button><button class="on" aria-label="Görünüm paleti"><svg class="ic"><use href="#sheet"/></svg></button><button aria-label="Görünümler"><svg class="ic"><use href="#wheel"/></svg></button><button aria-label="Özel özellikler"><svg class="ic"><use href="#form"/></svg></button>
    </div>
  </aside>
</main>

<div class="sheetbar">
  <div class="sheets">
    <div class="nav">
      <button aria-label="İlk"><svg viewBox="0 0 10 10"><path d="M2 1v8M9 1v8L4 5z" fill="#808080" stroke="#808080"/></svg></button>
      <button aria-label="Önceki"><svg viewBox="0 0 10 10"><path d="M7 1v8L2 5z" fill="#808080"/></svg></button>
      <button aria-label="Sonraki"><svg viewBox="0 0 10 10"><path d="M3 1v8l5-4z" fill="#808080"/></svg></button>
      <button aria-label="Son"><svg viewBox="0 0 10 10"><path d="M8 1v8M1 1v8l5-4z" fill="#808080" stroke="#808080"/></svg></button>
    </div>
    <button class="sheettab"><svg viewBox="0 0 12 12"><path d="M1 0h6l3 3v8H1z" fill="#eee"/><path d="M4 5h8v7H4z" fill="#416d80" stroke="#fff"/></svg>Çalışma Sayfası1</button>
    <button class="newsheet" aria-label="Sayfa ekle"><svg viewBox="0 0 14 12"><path d="M4 3h9v7l-4 1H5z" fill="#c9d7df"/><circle cx="4" cy="4" r="3" fill="#f5c63e"/></svg></button>
  </div>
  <div class="hscroll"><i></i></div>
</div>

<footer class="status">
  <span>SOLIDWORKS Premium 2021 SP5.1</span>
  <div class="info"><span class="s1">Normal Mesafe: 60mm Toplam Uzunluk: 200mm</span><span class="s2">Tam Tanımlı</span><span class="s3">Düzenleme Teknik Resim</span><span class="s4">1 : 2</span><span class="s5">▴</span></div>
</footer>

<div class="taskbar">
  <button class="weather">
    <svg viewBox="0 0 26 30"><circle cx="12" cy="15" r="9" fill="#f5a32c"/><path d="M6 27a5 5 0 0 1 1-9 6 6 0 0 1 10 0 5 5 0 0 1 3 9z" fill="#d3dff2"/><circle cx="17" cy="8" r="7.500" fill="#c42b2b"/><text x="14" y="12" font-size="11" fill="#fff">2</text></svg>
    <span>20°C<br><em>Kısmen güneşli</em></span>
  </button>
  <div class="apps">
    <button aria-label="Başlat"><svg viewBox="0 0 22 22"><path d="M0 0h10.500v10.500H0zM11.500 0H22v10.500H11.500zM0 11.500h10.500V22H0zM11.500 11.500H22V22H11.500z" fill="url(#win)"/></svg></button>
    <label class="ara"><svg class="mag"><use href="#mag"/></svg><input type="text" placeholder="Ara" aria-label="Ara"></label>
    <button aria-label="Görev görünümü"><svg viewBox="0 0 24 24"><path d="M3 7h15v14H3z" fill="#333"/><path d="M8 3h14v13H8z" fill="#f8f8f8"/><path d="M8 7h10v9H8z" fill="#aaa"/></svg></button>
    <button aria-label="Copilot"><svg viewBox="0 0 24 24"><path d="M7 3h7c2 0 2 3 1 5l-3 8c-1 3-3 4-6 3-5-1-4-6-3-9z" fill="#35a5e0"/><path d="M2 12l3-7c1-2 2-2 4-2l-4 14c-2-1-3-3-3-5z" fill="#6ccf65"/><path d="M12 3h4c2 0 2 2 3 5l-6 2z" fill="#3266d5"/><path d="M17 21h-7c-2 0-2-3-1-5l3-7c1-3 3-4 6-3 5 1 4 6 3 9z" fill="#e45898"/><path d="M10 21h6c2 0 4-4 5-7l-8-1z" fill="#f8a04c"/><path d="M10 9h4l-3 7H8z" fill="#fff"/></svg></button>
    <button class="run" aria-label="Edge"><svg viewBox="0 0 24 24"><circle cx="12" cy="12" r="11" fill="url(#edge)"/><path d="M2 10c4-7 15-6 15 1 0 2-2 3-3 2 1-5-7-6-8 1-1 5 4 10 9 9C6 25-1 18 2 10z" fill="#1764b7"/><path d="M12 16c3 3 7 3 10 1-3 6-10 5-10-1z" fill="#e7f2fc"/></svg></button>
    <button aria-label="Dosya Gezgini"><svg viewBox="0 0 24 24"><path d="M1 2h8l2 3h12v17H1z" fill="#d69b25"/><path d="M1 6h22v16H1z" fill="#fbcf51"/><path d="M5 16h14v6H5z" fill="#2388cf"/></svg></button>
    <button aria-label="Outlook"><svg viewBox="0 0 24 24"><path d="M5 10L16 2l7 7v12H6z" fill="#248ee1"/><path d="M8 9l9-6 5 6-10 6z" fill="#8cd6fa"/><path d="M9 22l14-11v9q0 2-2 2z" fill="#56c3f3"/><rect x="1" y="11" width="11" height="11" rx="2" fill="#145eb7"/><circle cx="6.500" cy="16.500" r="3" fill="none" stroke="#fff" stroke-width="1.500"/></svg></button>
    <button aria-label="Teams"><svg viewBox="0 0 24 24"><circle cx="10" cy="4" r="4" fill="#6b70dc"/><circle cx="19" cy="6" r="3" fill="#7a7ee0"/><path d="M5 9h11v12q-10 4-11-4z" fill="#5157c8"/><path d="M16 10h7v8q-1 4-7 4z" fill="#7b7ee7"/><rect x="1" y="10" width="11" height="11" rx="2" fill="#3f43ae"/><path d="M4 13h5M6.500 13v6" stroke="#fff" stroke-width="1.500"/></svg></button>
    <button class="run sw" aria-label="SOLIDWORKS 2021"><svg viewBox="0 0 24 26"><path d="M1 3l5-3h16v18l-5 4H1z" fill="#8a0c17"/><path d="M1 4h17v15H1z" fill="#c41c2b"/><text x="2" y="13" font-size="9" font-weight="700" fill="#fff">S</text><text x="9" y="15" font-size="9" font-weight="700" fill="#fff">W</text><path d="M4 18h20v8H4z" fill="#222"/><text x="5" y="25" font-size="8" font-weight="700" fill="#fff">2021</text></svg></button>
    <button class="run" aria-label="Kaydedici"><svg viewBox="0 0 24 24"><rect x="2" y="1" width="20" height="22" rx="2" fill="#2be888"/><path d="M12 6l2.500 2.500L12 11 9.500 8.500zM8 9.500l2.500 2.500L8 14.500 5.500 12zM16 9.500l2.500 2.500-2.500 2.500-2.500-2.500zM12 13l2.500 2.500L12 18l-2.500-2.500z" fill="#102b1d"/></svg></button>
  </div>
  <div class="tray">
    <button aria-label="Gizli simgeler"><svg viewBox="0 0 18 18"><path d="M4 11l5-5 5 5" fill="none" stroke="#333" stroke-width="1.500"/></svg></button>
    <span class="temp">29</span>
    <button aria-label="OneDrive"><svg viewBox="0 0 18 18"><path d="M4 14a3.500 3.500 0 0 1 0-7 5 5 0 0 1 9 0 3.500 3.500 0 0 1 1 7z" fill="#c8ccce" stroke="#555"/></svg></button>
    <button aria-label="Mikrofon"><svg viewBox="0 0 18 18"><rect x="6.500" y="1" width="5" height="10" rx="2.500" fill="#abc5eb" stroke="#386aa8"/><path d="M4 8c0 7 10 7 10 0M9 13v4" fill="none" stroke="#386aa8" stroke-width="1.300"/></svg></button>
    <button class="net" aria-label="Ağ, ses ve pil"><svg viewBox="0 0 18 18"><path d="M1 7q8-7 16 0M3.500 10q5.500-5 11 0M6 12.500q3-3 6 0" fill="none" stroke="#333" stroke-width="1.300"/><circle cx="9" cy="14.500" r="1.200" fill="#333"/></svg><svg viewBox="0 0 18 18"><path d="M1 7h3l4-4v12l-4-4H1zM10 6q3 3 0 6M12 4q5 5 0 10M14 2q6 7 0 14" fill="none" stroke="#333" stroke-width="1.200"/></svg><svg viewBox="0 0 18 18"><rect x="3" y="5" width="12" height="9" rx="1" fill="none" stroke="#333" stroke-width="1.300"/><path d="M16 8v3M3 1v6M1 3h4" stroke="#222" stroke-width="1.500"/></svg></button>
    <time>17:42<br>26.10.2025</time>
    <button aria-label="Bildirimler"><svg viewBox="0 0 18 18"><path d="M2 14h12l-2-3V9M8 3Q4 3 4 7v4l-2 3M6 16h4M7 7h3l-3 4h3M12 2h4l-4 4h4" fill="none" stroke="#333" stroke-width="1.200"/></svg></button>
  </div>
</div>
</body>
</html>
```
FILE: styles.css
```css
* { box-sizing: border-box; }
body {
  margin: 0; height: 100vh; display: flex; flex-direction: column; overflow: hidden;
  background: #525252; color: #e8e8e8; font: 11px/12px "Open Sans", "Noto Sans", sans-serif;
}
button, input, select { font: inherit; color: inherit; }
button { border: 0; padding: 0; background: none; }
h1, h2, h3 { margin: 0; font: inherit; }
svg { display: block; flex: none; }
.sprite { position: absolute; width: 0; height: 0; }
.ic { width: 18px; height: 18px; }
.car { width: 8px; height: 8px; }
.chev { width: 12px; height: 12px; color: #fff; }
.dot { width: 8px; height: 8px; border-radius: 50%; background: radial-gradient(#eee 20%, #888); }

/* title bar */
.titlebar { flex: none; height: 33px; display: flex; align-items: center; border-top: 1px solid #858585; border-bottom: 1px solid #858585; }
.brand { width: 134px; height: 31px; padding: 0 5px 0 4px; display: flex; align-items: center; border-right: 1px solid #858585; }
.ds { width: 20px; height: 18px; }
.wordmark { flex: 1; padding-left: 4px; font: italic 13px/16px Lato, sans-serif; color: #f3f3f3; }
.play { width: 8px; height: 12px; }
.quick { display: flex; padding-left: 20px; }
.q { width: 28px; height: 24px; display: flex; align-items: center; justify-content: center; }
.q.split { width: 41px; gap: 7px; }
.q.split:last-child { width: 46px; }
.q.dim { color: #777; }
.doc { flex: 1; text-align: center; font-size: 10px; color: #c6c6c6; white-space: nowrap; }
.search { width: 189px; height: 20px; padding: 0 2px 0 6px; display: flex; align-items: center; gap: 4px; background: #fff; color: #777; }
.search input { flex: 1; min-width: 0; border: 0; outline: 0; padding: 0 0 0 2px; background: none; font-size: 10px; }
.search input::placeholder { color: #666; opacity: 1; }
.term { width: 14px; height: 14px; }
.search .mag { width: 14px; height: 14px; }
.winbtns { display: flex; padding: 0 3px; color: #f5f5f5; }
.winbtns button { width: 34px; height: 24px; display: grid; place-items: center; }

/* ribbon */
.ribbon { flex: none; height: 76px; display: flex; }
.group { display: flex; height: 74px; border-right: 1px solid #808080; }
.g1 { width: 130px; padding-left: 3px; gap: 1px; }
.g2 { width: 127px; }
.g3 { width: 331px; }
.g4 { width: 130px; padding-left: 3px; }
.g5 { width: 46px; }
.g6 { width: 244px; padding-left: 3px; }
.g7 { width: 100px; border-right: 0; gap: 2px; padding-left: 2px; }
.big { display: flex; flex-direction: column; align-items: center; height: 73px; white-space: nowrap; }
.big .face { height: 56px; width: 100%; padding-top: 5px; display: block; text-align: center; }
.big .face .ic { margin: 0 auto 2px; }
.big .car { margin-top: 4px; }
.active { width: 80px; border: 1px solid #252525; }
.active .face { background: #343434; padding-top: 4px; }
.w28 { width: 28px; } .w45 { width: 45px; } .w60 { width: 60px; } .w64 { width: 64px; } .w76 { width: 76px; }
.list { display: grid; grid-template-rows: repeat(3, 24px); padding-top: 1px; }
.list button { display: flex; align-items: center; gap: 5px; white-space: nowrap; }
.list button:disabled { color: #858585; }
.w110 { width: 110px; } .w120 { width: 119px; }
.g3 .list { margin-left: 2px; }
.g3 .list + .list { margin-left: 0; }
.collapse { margin: auto 6px 5px auto; }

/* work area */
.work { flex: 1; min-height: 0; display: grid; grid-template-columns: 215px 1fr 16px; grid-template-rows: 21px 1fr; }
.tabs { grid-area: 1 / 1 / 2 / 3; z-index: 1; justify-self: start; display: flex; height: 21px; background: #383838; }
.tabs button { padding: 0 6px; border: solid #777; border-width: 1px 1px 0 0; }
.tabs .on { padding: 0 7px; background: #525252; font-weight: 600; border-top-color: #525252; }
.canvas { grid-area: 1 / 2 / 3 / 3; position: relative; background: #fff; overflow: hidden; }
.drawing { position: absolute; width: 100%; height: 100%; }
.cad { font-family: Lato, sans-serif; }
.hud { position: absolute; left: 400px; top: 3px; display: flex; color: #888; }
.hud button { width: 24px; height: 24px; display: flex; align-items: center; justify-content: center; }
.hud .wide { width: 38px; gap: 4px; }
.hud .pressed { background: #999; border: 1px solid #666; }
.childwin { position: absolute; right: 6px; top: 3px; display: flex; color: #a5a5a5; }
.childwin button { width: 24px; height: 24px; display: grid; place-items: center; }
.childwin .ic { width: 16px; height: 16px; }
.handle { position: absolute; left: 0; top: 249px; width: 8px; height: 36px; display: grid; place-items: center; background: #525252; }
.handle .dot { width: 6px; height: 6px; }

/* property panel */
.panel { grid-area: 2 / 1 / 3 / 2; min-height: 0; display: flex; flex-direction: column; border-top: 1px solid #83a19c; border-right: 2px solid #797979; background: #525252; }
.grip { height: 18px; margin-top: 1px; padding-top: 1px; display: grid; place-items: center; border-top: 2px solid #73807e; border-bottom: 1px solid #858585; flex: none; }
.ptabs { flex: none; height: 24px; margin: 3px 0 0 2px; display: flex; }
.ptabs::after { content: ""; flex: 1; border-bottom: 1px solid #858585; }
.ptabs button { width: 37px; display: grid; place-items: center; border: solid #858585; border-width: 1px 1px 0 0; }
.ptabs .off { background: #3b3b3b; border-bottom-width: 1px; }
.ptitle { flex: none; height: 30px; display: flex; align-items: center; gap: 6px; padding: 0 12px 0 8px; font-weight: 600; }
.ptitle button { margin-left: auto; }
.ptitle button svg { width: 12px; height: 12px; }
.ok { align-self: flex-start; margin: 1px 0 0 6px; }
.ok .ic { width: 16px; height: 16px; }
.subtabs { flex: none; height: 23px; margin: 15px 0 0 2px; display: flex; }
.subtabs i { flex: 1; border-bottom: 1px solid #858585; }
.subtabs button { padding: 0 4px; background: #3b3b3b; border: solid #858585; border-width: 1px 1px 1px 0; }
.subtabs .on { padding: 0 5px; background: none; border-bottom-color: #525252; }
.scroller { flex: 1; min-height: 0; margin-top: 15px; display: flex; overflow: hidden; }
.props { flex: 1; min-width: 0; padding: 0 3px 0 5px; }
.props section { border-bottom: 1px solid #8b8b8b; padding-bottom: 9px; }
.props .first { padding-bottom: 5px; }
.props .tight { padding-bottom: 1px; }
.props section:last-child { border-bottom: 0; }
.props h3 { height: 27px; padding: 0 2px 0 3px; display: flex; align-items: center; justify-content: space-between; font-size: 10px; font-weight: 600; white-space: nowrap; }
.props section + section h3 { height: 26px; font-size: 10px; font-weight: 700; }
.pscroll { width: 16px; margin-right: 2px; padding: 16px 7px; background: #f0f0f0; }
.pscroll i { display: block; width: 2px; height: 170px; background: #888; }
.aids { display: grid; grid-template-rows: 22px 31px 30px; }
.aid { display: flex; align-items: center; gap: 9px; padding-left: 12px; }
.quickdim { gap: 6px; padding-left: 14px; }
.quickdim .ic { width: 16px; height: 16px; }
.aid input { appearance: none; width: 11px; height: 11px; margin: 0 -3px 0 3px; border-radius: 2px; display: grid; place-items: center; background: #1769bd; }
.aid input::after { content: ""; width: 6px; height: 3px; border: solid #fff; border-width: 0 0 1px 1px; transform: rotate(-45deg); }
.framed { width: 22px; height: 22px; padding: 1px; border: 1px solid #2a2a2a; background: #666; }
.styles { display: flex; padding-left: 31px; margin-bottom: 5px; }
.styles button { width: 23px; height: 22px; display: grid; place-items: center; border: 1px solid #3d3d3d; background: #4a4a4a; }
.field { display: flex; align-items: center; padding: 0 5px 0 36px; }
.field.tall { height: 22px; padding-left: 4px; gap: 12px; margin-bottom: 8px; }
.field .ic { width: 20px; height: 20px; }
.field select {
  appearance: none; flex: 1; min-width: 0; height: 20px; padding: 0 4px; border: 1px solid #ccc; border-radius: 0; color: #111;
  background: linear-gradient(45deg, transparent 45%, #777 45% 55%, transparent 55%) right 8px center / 5px 5px no-repeat,
    linear-gradient(-45deg, transparent 45%, #777 45% 55%, transparent 55%) right 4px center / 5px 5px no-repeat, #fff;
}
.field input { flex: 1; min-width: 0; width: 0; height: 20px; padding: 0 4px; border: 2px solid #ddd; background: #c0c0c0; color: #858585; }
.field.value { margin-top: 5px; }
.spin { display: grid; margin-left: 1px; }
.spin button { width: 19px; height: 10px; display: grid; place-items: center; background: #ddd; border: 1px solid #bbb; }
.spin svg { width: 8px; height: 6px; }

/* right rail */
.rail { grid-area: 1 / 3 / 3 / 4; position: relative; display: flex; flex-direction: column; }
.cap { height: 48px; background: #525252; }
.vscroll { flex: 1; padding: 172px 7px 0; background: #f0f0f0; }
.vscroll i { display: block; width: 2px; height: 90px; background: #888; }
.taskpane { position: absolute; right: 0; top: 48px; width: 24px; display: grid; gap: 1px; padding: 1px 0 1px 1px; background: #777; }
.taskpane button { height: 21px; display: grid; place-items: center; background: #3a3a3a; }
.taskpane .on { background: #b5b5b5; }
.taskpane .ic { width: 16px; height: 16px; }

/* sheet tabs and status */
.sheetbar { flex: none; height: 15px; display: flex; }
.sheets { flex: 0 0 630px; display: flex; background: #505050; border-right: 2px solid #333; }
.nav { width: 60px; display: grid; grid-template-columns: repeat(4, 15px); background: #a1a1a1; }
.nav button { display: grid; place-items: center; border-right: 1px solid #858585; }
.nav svg { width: 8px; height: 8px; }
.sheettab { width: 118px; display: flex; align-items: center; justify-content: center; gap: 2px; background: #303030; color: #f2f2f2; font-weight: 600; white-space: nowrap; }
.sheettab svg { width: 12px; height: 12px; }
.newsheet { width: 36px; display: grid; place-items: center; background: #383838; border: solid #777; border-width: 0 1px; }
.newsheet svg { width: 14px; height: 12px; }
.hscroll { flex: 1; padding: 7px 83px 0 82px; background: #f0f0f0; }
.hscroll i { display: block; height: 2px; background: #8b8b8b; }
.status { flex: none; height: 18px; display: flex; align-items: center; justify-content: space-between; background: #979797; color: #f0f0f0; white-space: nowrap; }
.info { width: 747px; display: flex; }
.s1 { width: 270px; } .s2 { width: 79px; } .s3 { width: 152px; } .s4 { width: 34px; } .s5 { width: 41px; border-right: 1px solid #bbb; }

/* taskbar */
.taskbar { flex: none; height: 45px; display: flex; align-items: center; border-bottom: 1px solid #3b4858; background: linear-gradient(90deg, #e6f3f6, #dfe6f5 30%, #d9e0f3 55%, #e1ebf5 80%, #e3f1f4); color: #333; }
.weather { flex: 1 1 0; padding-left: 18px; display: flex; align-items: center; gap: 3px; text-align: left; line-height: 15px; }
.weather svg { width: 26px; height: 30px; }
.weather em { font-style: normal; color: #555; }
.apps { display: flex; align-items: center; padding-left: 3px; }
.apps button { width: 41px; height: 44px; display: grid; place-items: center; border-bottom: 3px solid transparent; border-top: 3px solid transparent; position: relative; }
.apps button:first-child { width: 22px; margin-right: 13px; }
.apps svg { width: 24px; height: 24px; }
.apps button:first-child svg { width: 22px; height: 22px; }
.ara { width: 204px; height: 28px; margin-right: 2px; padding: 0 8px; display: flex; align-items: center; gap: 8px; border-radius: 14px; background: #f6f9fc; }
.apps .mag { width: 16px; height: 16px; }
.ara input { width: 100px; border: 0; outline: 0; background: none; font-size: 12px; }
.ara input::placeholder { color: #666; opacity: 1; }
.run::after { content: ""; position: absolute; bottom: -1px; left: 18px; width: 6px; height: 2px; border-radius: 1px; background: #7d858e; }
.apps .sw { border-radius: 6px; background: #edf0f8; background-clip: padding-box; }
.tray { flex: 1 1 0; display: flex; align-items: center; justify-content: flex-end; gap: 12px; padding-right: 17px; }
.tray svg { width: 18px; height: 18px; }
.temp { padding: 2px 1px; background: #8df77a; color: #111; font-weight: 700; font-size: 12px; }
.net { display: flex; gap: 4px; }
.tray time { text-align: right; line-height: 15px; }
.tray time + button { margin-left: -6px; }
```
